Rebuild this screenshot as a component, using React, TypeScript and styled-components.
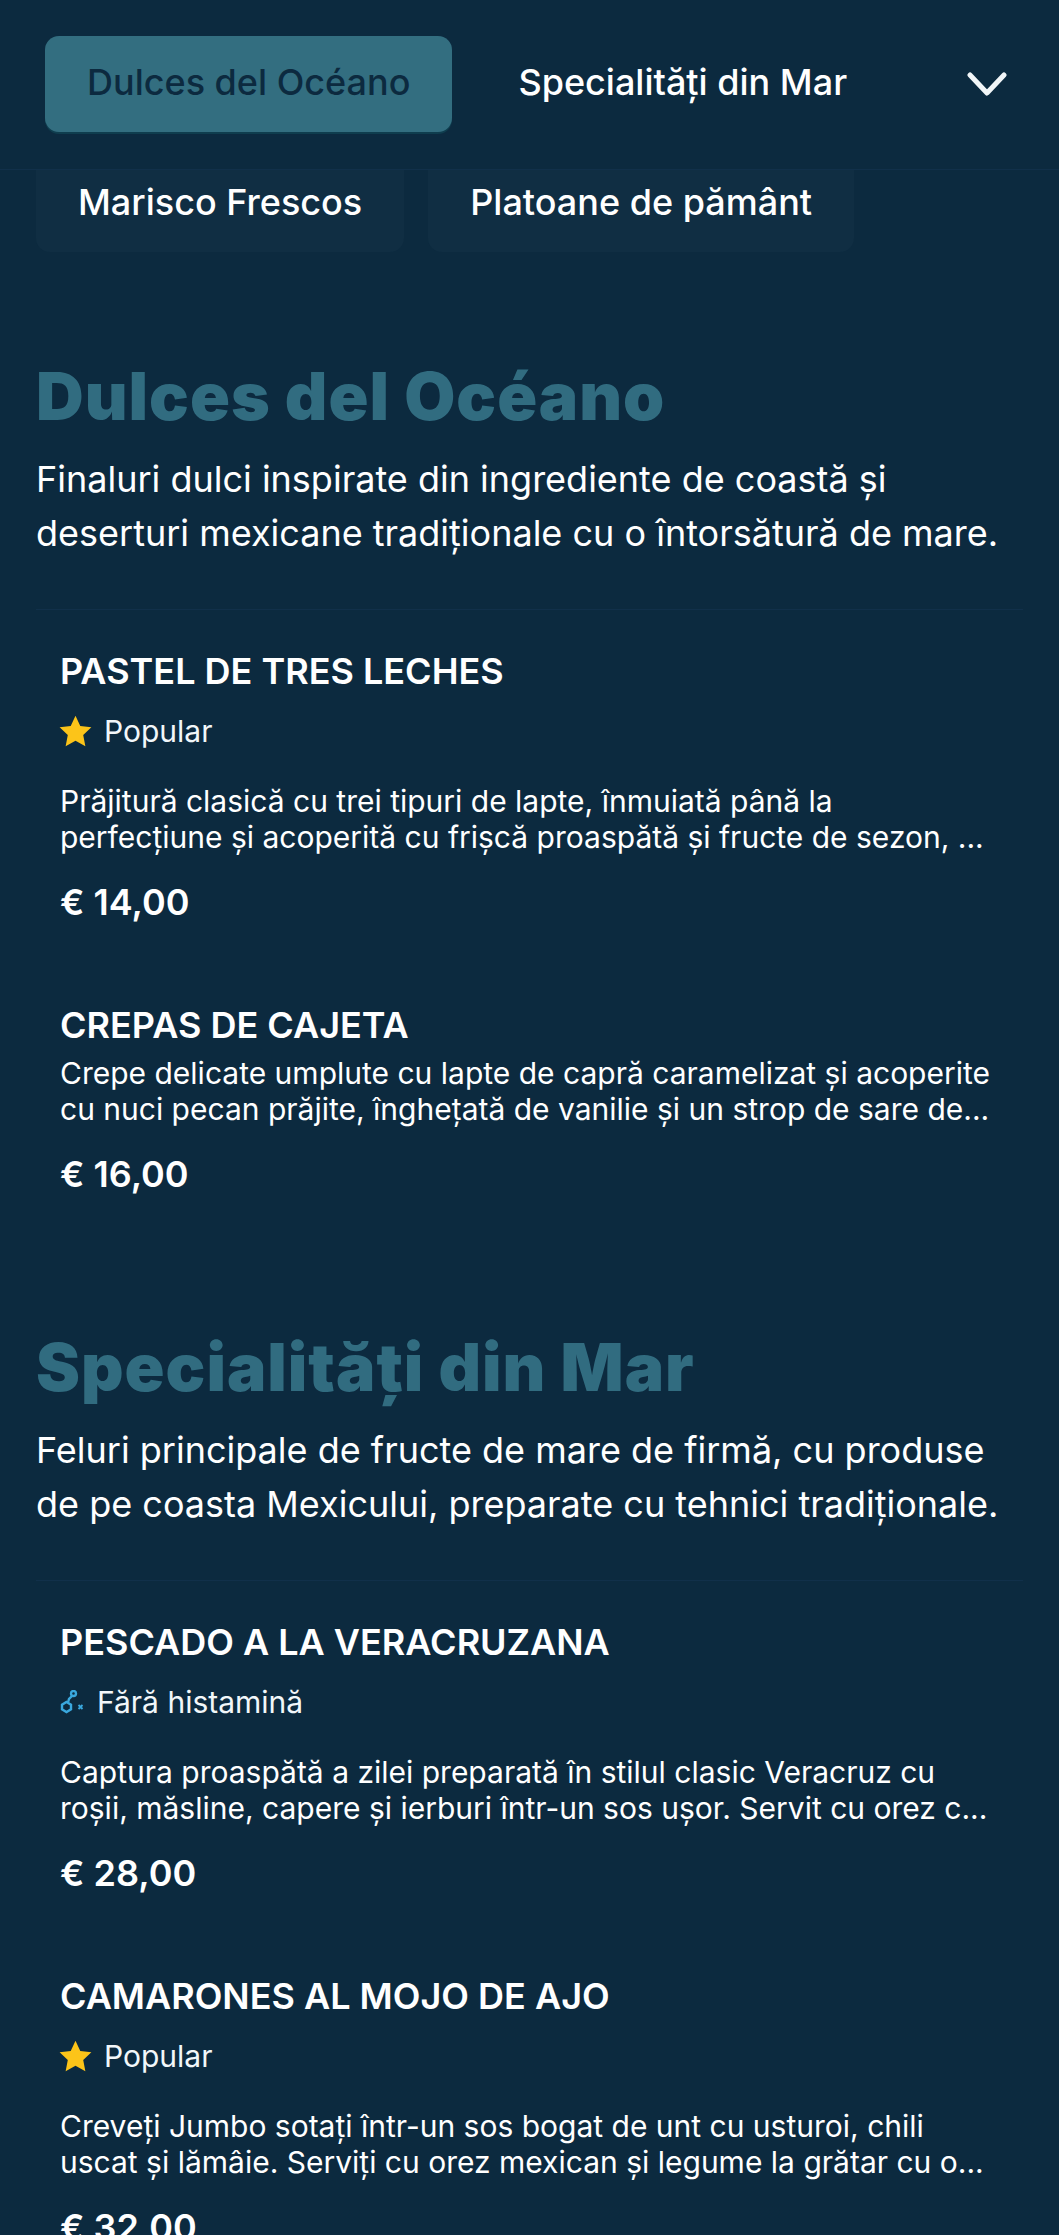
import React from "react";
import styled, { createGlobalStyle } from "styled-components";

const GlobalStyle = createGlobalStyle`
  html, body {
    margin: 0;
    padding: 0;
    height: 2235px;
    overflow: hidden;
    background-color: #0c2a3f;
  }
  * { box-sizing: border-box; }
`;

const Page = styled.div`
  width: 1059px;
  height: 2235px;
  overflow: hidden;
  background-color: #0c2a3f;
  color: #ffffff;
  font-family: Inter, "Liberation Sans", sans-serif;
`;

const Nav = styled.nav`
  position: relative;
  z-index: 2;
  height: 170px;
  background-color: #0c2a3f;
  border-bottom: 1px solid #11304a;
  display: flex;
  align-items: flex-start;
  gap: 24px;
  padding: 36px 0 0 45px;
`;

const Tab = styled.button<{ $active?: boolean }>`
  height: 96px;
  padding: 0 42px 4px;
  border: none;
  border-radius: 14px;
  font-family: inherit;
  font-size: 36px;
  font-weight: 500;
  white-space: nowrap;
  background-color: ${({ $active }) => ($active ? "#336e80" : "transparent")};
  color: ${({ $active }) => ($active ? "#0c2a3f" : "#ffffff")};
  box-shadow: ${({ $active }) => ($active ? "0 2px 0 #0f3d4e" : "none")};
`;

const Toggle = styled.div`
  margin-left: auto;
  margin-right: 52px;
  height: 96px;
  display: flex;
  align-items: center;
  color: #f2f6f8;
`;

const ChipRow = styled.div`
  display: flex;
  gap: 24px;
  padding: 0 36px;
  margin-top: -20px;
`;

const Chip = styled.div`
  height: 102px;
  padding: 21px 42px 0;
  border-radius: 14px;
  background-color: #102e43;
  font-size: 36px;
  font-weight: 500;
  line-height: 62px;
  white-space: nowrap;
`;

const Section = styled.section<{ $top: number }>`
  padding: ${({ $top }) => $top}px 36px 0;
`;

const Heading = styled.h2`
  margin: 0;
  font-size: 66px;
  font-weight: 900;
  letter-spacing: 1px;
  line-height: 80px;
  color: #316c80;
`;

const Lead = styled.p`
  margin: 16px 0 0;
  font-size: 36px;
  line-height: 54px;
  padding-bottom: 49px;
  border-bottom: 1px solid #11304a;
`;

const Item = styled.article`
  padding: 38px 24px;
`;

const ItemTitle = styled.h3`
  margin: 0 0 7px;
  font-size: 36px;
  font-weight: 600;
  line-height: 46px;
  text-transform: uppercase;
`;

const Tag = styled.div`
  display: flex;
  align-items: center;
  gap: 12px;
  margin-top: 17px;
  margin-bottom: 32px;
  font-size: 30px;
  line-height: 40px;
  color: #f2f7fa;
`;

const Desc = styled.p`
  margin: 0;
  font-size: 30px;
  line-height: 36px;
`;

const Price = styled.div`
  margin-top: 23px;
  font-size: 36px;
  font-weight: 600;
  line-height: 48px;
`;

const StarSvg = styled.svg`
  width: 37px;
  height: 37px;
  margin: 0 -2px 0 -3px;
  flex: none;
`;

const MoleculeSvg = styled.svg`
  width: 25px;
  height: 24px;
  flex: none;
`;

const StarIcon = () => (
  <StarSvg viewBox="0 0 24 24" aria-hidden="true">
    <path
      d="M12 1.8l3.1 6.6 7.2.9-5.3 5 1.4 7.2L12 18l-6.4 3.5L7 14.3l-5.3-5 7.2-.9z"
      fill="#fcc419"
    />
  </StarSvg>
);

const MoleculeIcon = () => (
  <MoleculeSvg viewBox="0 0 25 24" fill="none" stroke="#3aa8de" strokeWidth="2.4" aria-hidden="true">
    <path d="M6.5 12l4.5 2.6v4.8L6.5 22 2 19.4v-4.8z" />
    <path d="M8 12.5l1-3.5 3-3" />
    <circle cx="13.5" cy="3.5" r="2.5" />
    <path d="M18.5 15l4 4M22.5 15l-4 4" strokeWidth="1.8" />
  </MoleculeSvg>
);

const ChevronIcon = () => (
  <svg
    width="40"
    height="24"
    viewBox="0 0 40 24"
    fill="none"
    stroke="currentColor"
    strokeWidth="5"
    strokeLinecap="round"
    strokeLinejoin="round"
    aria-hidden="true"
  >
    <path d="M3 3l17 18L37 3" />
  </svg>
);

type MenuItem = {
  title: string;
  tag?: "popular" | "histamine";
  desc: string;
  price: string;
};

type MenuSection = {
  title: string;
  lead: string;
  top: number;
  items: MenuItem[];
};

const sections: MenuSection[] = [
  {
    title: "Dulces del Océano",
    lead: "Finaluri dulci inspirate din ingrediente de coastă și deserturi mexicane tradiționale cu o întorsătură de mare.",
    top: 104,
    items: [
      {
        title: "Pastel de Tres Leches",
        tag: "popular",
        desc: "Prăjitură clasică cu trei tipuri de lapte, înmuiată până la perfecțiune și acoperită cu frișcă proaspătă și fructe de sezon, ...",
        price: "€ 14,00",
      },
      {
        title: "Crepas de Cajeta",
        desc: "Crepe delicate umplute cu lapte de capră caramelizat și acoperite cu nuci pecan prăjite, înghețată de vanilie și un strop de sare de...",
        price: "€ 16,00",
      },
    ],
  },
  {
    title: "Specialități din Mar",
    lead: "Feluri principale de fructe de mare de firmă, cu produse de pe coasta Mexicului, preparate cu tehnici tradiționale.",
    top: 91,
    items: [
      {
        title: "Pescado a la Veracruzana",
        tag: "histamine",
        desc: "Captura proaspătă a zilei preparată în stilul clasic Veracruz cu roșii, măsline, capere și ierburi într-un sos ușor. Servit cu orez c...",
        price: "€ 28,00",
      },
      {
        title: "Camarones al Mojo de Ajo",
        tag: "popular",
        desc: "Creveți Jumbo sotați într-un sos bogat de unt cu usturoi, chili uscat și lămâie. Serviți cu orez mexican și legume la grătar cu o...",
        price: "€ 32,00",
      },
    ],
  },
];

const App = () => (
  <Page>
    <GlobalStyle />
    <Nav>
      <Tab $active>Dulces del Océano</Tab>
      <Tab>Specialități din Mar</Tab>
      <Toggle>
        <ChevronIcon />
      </Toggle>
    </Nav>
    <ChipRow>
      <Chip>Marisco Frescos</Chip>
      <Chip>Platoane de pământ</Chip>
    </ChipRow>
    {sections.map((section) => (
      <Section key={section.title} $top={section.top}>
        <Heading>{section.title}</Heading>
        <Lead>{section.lead}</Lead>
        {section.items.map((item) => (
          <Item key={item.title}>
            <ItemTitle>{item.title}</ItemTitle>
            {item.tag === "popular" && (
              <Tag>
                <StarIcon />
                Popular
              </Tag>
            )}
            {item.tag === "histamine" && (
              <Tag>
                <MoleculeIcon />
                Fără histamină
              </Tag>
            )}
            <Desc>{item.desc}</Desc>
            <Price>{item.price}</Price>
          </Item>
        ))}
      </Section>
    ))}
  </Page>
);

export default App;
